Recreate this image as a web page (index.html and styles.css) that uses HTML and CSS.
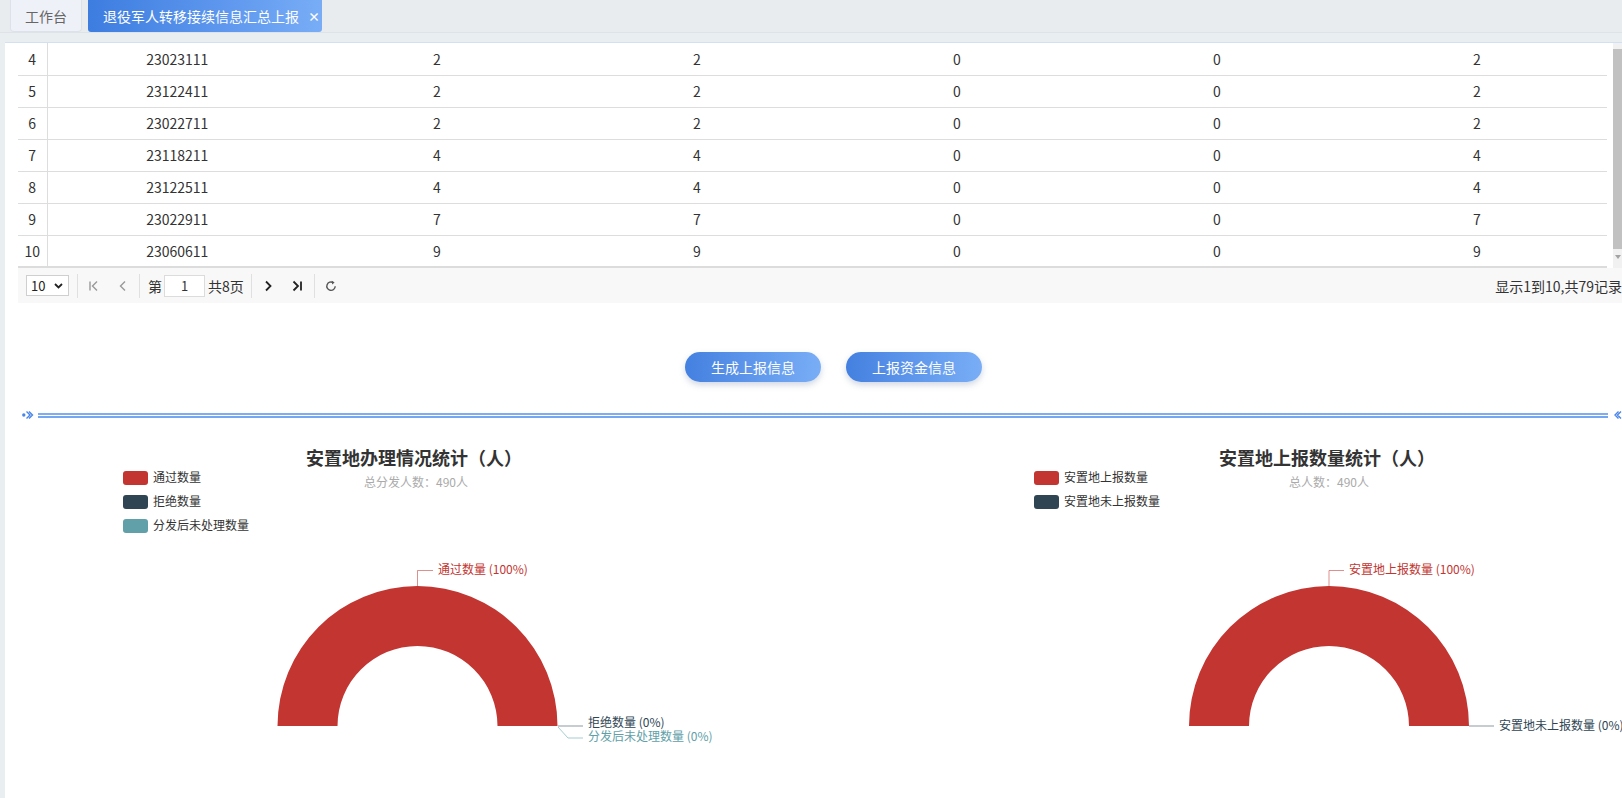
FILE: index.html
```html
<!DOCTYPE html>
<html lang="zh-CN">
<head>
<meta charset="utf-8">
<title>退役军人转移接续信息汇总上报</title>
<link rel="stylesheet" href="styles.css">
</head>
<body>
<div class="tabbar">
  <div class="tab">工作台</div>
  <div class="tab tab-active">退役军人转移接续信息汇总上报<span class="tab-close">×</span></div>
</div>
<div class="panel">
  <div class="grid-wrap">
    <table class="grid">
      <colgroup><col class="c-idx"><col class="c-w"><col class="c-w"><col class="c-w"><col class="c-w"><col class="c-w"><col class="c-w"></colgroup>
      <tbody>
        <tr><td class="idx">4</td><td>23023111</td><td>2</td><td>2</td><td>0</td><td>0</td><td>2</td></tr>
        <tr><td class="idx">5</td><td>23122411</td><td>2</td><td>2</td><td>0</td><td>0</td><td>2</td></tr>
        <tr><td class="idx">6</td><td>23022711</td><td>2</td><td>2</td><td>0</td><td>0</td><td>2</td></tr>
        <tr><td class="idx">7</td><td>23118211</td><td>4</td><td>4</td><td>0</td><td>0</td><td>4</td></tr>
        <tr><td class="idx">8</td><td>23122511</td><td>4</td><td>4</td><td>0</td><td>0</td><td>4</td></tr>
        <tr><td class="idx">9</td><td>23022911</td><td>7</td><td>7</td><td>0</td><td>0</td><td>7</td></tr>
        <tr class="last"><td class="idx">10</td><td>23060611</td><td>9</td><td>9</td><td>0</td><td>0</td><td>9</td></tr>
      </tbody>
    </table>
    <div class="vscroll"><div class="vthumb"></div><div class="varrow"></div></div>
  </div>
  <div class="pager">
    <div class="pager-left">
      <div class="pg-select">10<svg width="9" height="6" viewBox="0 0 9 6"><path d="M1 1 L4.5 4.5 L8 1" fill="none" stroke="#222" stroke-width="1.8"/></svg></div>
      <span class="pg-sep sep-a"></span>
      <svg class="pg-first" width="12" height="12" viewBox="0 0 12 12"><path d="M2 1.5 V10.5 M9 1.5 L4.5 6 L9 10.5" fill="none" stroke="#999" stroke-width="1.4"/></svg>
      <svg class="pg-prev" width="12" height="12" viewBox="0 0 12 12"><path d="M8 1.5 L3.5 6 L8 10.5" fill="none" stroke="#999" stroke-width="1.4"/></svg>
      <span class="pg-sep sep-b"></span>
      <span class="pg-text">第</span>
      <div class="pg-input">1</div>
      <span class="pg-text pg-total">共8页</span>
      <span class="pg-sep sep-c"></span>
      <svg class="pg-next" width="12" height="12" viewBox="0 0 12 12"><path d="M4 1.5 L8.5 6 L4 10.5" fill="none" stroke="#222" stroke-width="1.8"/></svg>
      <svg class="pg-last" width="12" height="12" viewBox="0 0 12 12"><path d="M2.5 1.5 L7 6 L2.5 10.5 M10 1.5 V10.5" fill="none" stroke="#222" stroke-width="1.8"/></svg>
      <span class="pg-sep sep-d"></span>
      <svg class="pg-refresh" width="12" height="12" viewBox="0 0 12 12"><path d="M8.2 2.6 A4.2 4.2 0 1 0 10.2 6.3" fill="none" stroke="#555" stroke-width="1.4"/><path d="M6.8 0.8 L9.6 2.4 L7.2 4.4 Z" fill="#555"/></svg>
    </div>
    <div class="pager-right">显示1到10,共79记录</div>
  </div>
  <div class="actions">
    <button class="btn">生成上报信息</button>
    <button class="btn">上报资金信息</button>
  </div>
  <div class="divider">
    <svg class="div-ico-l" width="12" height="10" viewBox="0 0 12 10"><circle cx="1.8" cy="5" r="1.7" fill="#4a86e8"/><path d="M4.5 1.5 L8 5 L4.5 8.5 M7 1.5 L10.5 5 L7 8.5" fill="none" stroke="#4a86e8" stroke-width="1.4"/></svg>
    <div class="div-lines"></div>
    <svg class="div-ico-r" width="12" height="10" viewBox="0 0 12 10"><path d="M7.5 1.5 L4 5 L7.5 8.5 M10 1.5 L6.5 5 L10 8.5" fill="none" stroke="#4a86e8" stroke-width="1.4"/></svg>
  </div>
  <div class="charts">
    <svg class="chart" width="912" height="381" viewBox="0 0 912 381">
      <text class="ch-title" x="396" y="49">安置地办理情况统计（人）</text>
      <text class="ch-sub" x="398" y="71">总分发人数：490人</text>
      <rect x="105" y="55" width="25" height="14" rx="3" fill="#c23531"/>
      <text class="lg" x="135" y="66">通过数量</text>
      <rect x="105" y="79" width="25" height="14" rx="3" fill="#2f4554"/>
      <text class="lg" x="135" y="90">拒绝数量</text>
      <rect x="105" y="103" width="25" height="14" rx="3" fill="#61a0a8"/>
      <text class="lg" x="135" y="114">分发后未处理数量</text>
      <path d="M259.5 310 A140 140 0 0 1 539.5 310 L479.5 310 A80 80 0 0 0 319.5 310 Z" fill="#c23531"/>
      <path d="M399.5 170 V154.5 H415" fill="none" stroke="#c23531" stroke-opacity="0.55"/>
      <text class="lb" x="420" y="158" fill="#c23531">通过数量 (100%)</text>
      <path d="M540 310 H565" fill="none" stroke="#2f4554" stroke-opacity="0.55"/>
      <text class="lb" x="570" y="311" fill="#2f4554">拒绝数量 (0%)</text>
      <path d="M540 311 L550 322 H565" fill="none" stroke="#61a0a8" stroke-opacity="0.55"/>
      <text class="lb" x="570" y="325" fill="#61a0a8">分发后未处理数量 (0%)</text>
    </svg>
    <svg class="chart" width="912" height="381" viewBox="0 0 912 381">
      <text class="ch-title" x="397" y="49">安置地上报数量统计（人）</text>
      <text class="ch-sub" x="399" y="71">总人数：490人</text>
      <rect x="104" y="55" width="25" height="14" rx="3" fill="#c23531"/>
      <text class="lg" x="134" y="66">安置地上报数量</text>
      <rect x="104" y="79" width="25" height="14" rx="3" fill="#2f4554"/>
      <text class="lg" x="134" y="90">安置地未上报数量</text>
      <path d="M259 310 A140 140 0 0 1 539 310 L479 310 A80 80 0 0 0 319 310 Z" fill="#c23531"/>
      <path d="M399 170 V154.5 H414" fill="none" stroke="#c23531" stroke-opacity="0.55"/>
      <text class="lb" x="419" y="158" fill="#c23531">安置地上报数量 (100%)</text>
      <path d="M539 310 H564" fill="none" stroke="#2f4554" stroke-opacity="0.55"/>
      <text class="lb" x="569" y="314" fill="#2f4554">安置地未上报数量 (0%)</text>
    </svg>
  </div>
</div>
</body>
</html>
```
FILE: styles.css
```css
* { box-sizing: border-box; }
html, body { margin: 0; padding: 0; }
body {
  width: 1622px;
  height: 798px;
  overflow: hidden;
  background: #e9eef0;
  font-family: "Noto Sans CJK SC", "Noto Sans", sans-serif;
  color: #333;
}
.tabbar {
  height: 33px;
  display: flex;
  align-items: stretch;
  gap: 6px;
  padding-left: 10px;
  background: #e9ecef;
  border-bottom: 1px solid #dfe3e7;
}
.tab {
  display: flex;
  align-items: center;
  width: 72px;
  justify-content: center;
  font-size: 14px;
  color: #666;
  background: #eef1f7;
  border: 1px solid #dde2ea;
  border-top: none;
  border-radius: 0 0 4px 4px;
}
.tab-active {
  width: 234px;
  justify-content: flex-start;
  padding-left: 15px;
  color: #fff;
  border: none;
  border-radius: 0 0 3px 3px;
  background: linear-gradient(90deg, #3d7de0 0%, #5f98ee 60%, #78adf6 100%);
}
.tab-close {
  font-size: 12px;
  font-weight: bold;
  margin-left: 9px;
}
.panel {
  margin-top: 9px;
  margin-left: 5px;
  width: 1640px;
  height: 760px;
  background: #fff;
  border-top: 1px solid #d3e0f3;
  padding-left: 13px;
}
.grid-wrap {
  display: flex;
  align-items: stretch;
}
.grid {
  width: 1589px;
  border-collapse: collapse;
  table-layout: fixed;
  font-size: 14px;
  color: #333;
}
.c-idx { width: 29px; }
.c-w { width: 260px; }
.grid td {
  height: 32px;
  padding: 0;
  text-align: center;
  border-bottom: 1px solid #dddddd;
}
.grid td.idx {
  border-right: 1px solid #dddddd;
}
.grid tr.last td { border-bottom: 2px solid #dcdcdc; }
.vscroll {
  margin-left: 6px;
  width: 17px;
  background: #f1f1f1;
  display: flex;
  flex-direction: column;
  padding-top: 6px;
}
.vthumb {
  height: 200px;
  background: #c1c1c1;
}
.varrow {
  margin: 6px 0 0 2px;
  width: 0;
  height: 0;
  border-left: 3px solid transparent;
  border-right: 3px solid transparent;
  border-top: 4px solid #a3a3a3;
}
.pager {
  height: 35px;
  width: 1604px;
  background: #f8f8f8;
  display: flex;
  align-items: center;
  justify-content: space-between;
  font-size: 14px;
  color: #333;
}
.pager-left {
  display: flex;
  align-items: center;
  padding-left: 8px;
}
.pg-select {
  width: 43px;
  height: 21px;
  border: 1px solid #cfcfcf;
  background: #fff;
  display: flex;
  align-items: center;
  justify-content: space-between;
  padding: 0 5px 0 4px;
  font-size: 13px;
  color: #222;
}
.pg-sep {
  flex: none;
  width: 1px;
  height: 24px;
  background: #e0e0e0;
}
.sep-a { margin: 0 10px 0 8px; }
.pg-prev { margin-left: 17px; }
.sep-b { margin: 0 8px 0 10px; }
.pg-input {
  width: 41px;
  height: 22px;
  margin: 0 3px 0 2px;
  border: 1px solid #dcdcdc;
  background: #fff;
  display: flex;
  align-items: center;
  justify-content: center;
  color: #333;
  font-size: 13px;
}
.sep-c { margin: 0 10px 0 7px; }
.pg-last { margin-left: 17px; }
.sep-d { margin: 0 10px 0 11px; }
.pg-text { color: #333; }
.pager-right {
  color: #333;
  font-size: 14px;
}
.actions {
  display: flex;
  justify-content: center;
  gap: 25px;
  padding-left: 27px;
  width: 1604px;
  margin-top: 49px;
}
.btn {
  width: 136px;
  height: 30px;
  border: none;
  border-radius: 15px;
  color: #fff;
  font-family: "Noto Sans CJK SC", sans-serif;
  font-size: 14px;
  background: linear-gradient(90deg, #4480e0 0%, #79aef6 100%);
  box-shadow: 0 3px 6px rgba(90, 110, 150, 0.28);
  padding: 0;
}
.divider {
  margin-top: 28px;
  display: flex;
  align-items: center;
  width: 1640px;
}
.div-ico-l { flex: none; margin-left: 4px; }
.div-ico-r { flex: none; margin-left: 3px; }
.div-lines {
  flex: none;
  width: 1570px;
  margin-left: 4px;
  height: 5px;
  border-top: 2px solid #7eadf3;
  border-bottom: 2px solid #75a6f0;
}
.charts {
  display: flex;
  margin-top: -4px;
}
.chart {
  flex: none;
  display: block;
}
.ch-title {
  font-size: 18px;
  font-weight: bold;
  fill: #333;
  text-anchor: middle;
}
.ch-sub {
  font-size: 12px;
  fill: #aaa;
  text-anchor: middle;
}
.lg {
  font-size: 12px;
  fill: #333;
}
.lb {
  font-size: 12px;
}
```
